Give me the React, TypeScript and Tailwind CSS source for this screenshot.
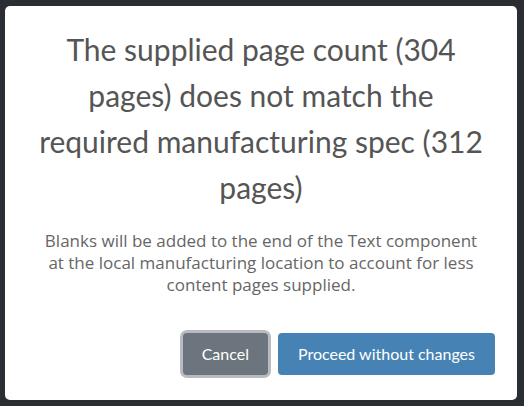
import React from "react";

export default function App() {
  return (
    <div className="w-[524px] h-[406px] bg-[#2a2d33] pt-[6px] pl-[5px] pr-[7px] pb-[6px]" style={{ fontFamily: "Lato, 'Open Sans', sans-serif" }}>
      <div className="bg-white rounded-[5px] h-full flex flex-col items-center px-[22px] pt-[20px]">
        <h1 className="text-[30px] leading-[46px] text-[#555555] text-center font-normal px-[4px]">
          The supplied page count (304 pages) does not match the required manufacturing spec (312 pages)
        </h1>
        <p className="mt-[20px] text-[17px] leading-[22px] text-[#666666] text-center px-[10px] font-['Open_Sans']">
          Blanks will be added to the end of the Text component at the local manufacturing location to account for less content pages supplied.
        </p>
        <div className="mt-auto mb-[25px] self-end flex items-center gap-[10px]">
          <button type="button" className="h-[42px] px-[19px] rounded-[4px] bg-[#6c757d] text-white text-[16px] ring-[3px] ring-[#b8bcc1]">
            Cancel
          </button>
          <button type="button" className="h-[42px] px-[20px] rounded-[4px] bg-[#4682b4] text-white text-[16px]">
            Proceed without changes
          </button>
        </div>
      </div>
    </div>
  );
}
